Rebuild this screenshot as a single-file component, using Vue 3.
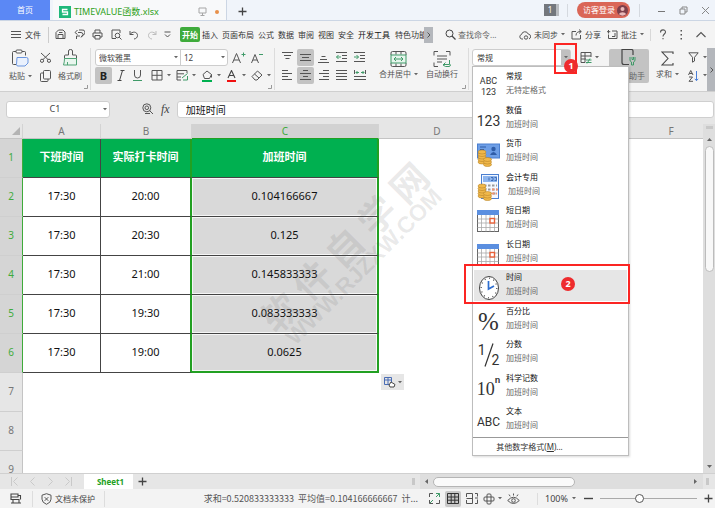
<script setup>
import { h, ref } from 'vue'

const K = 'fill="none" stroke="#555" stroke-width="1"'
const G = 'fill="none" stroke="#3f9a68" stroke-width="1"'
const S = 'fill="none" stroke="#c9c9c9" stroke-width="1"'

const icons = {
  logo: [12, 12, '<rect width="12" height="12" fill="#1fb87a"/><path d="M8.5 3.5h-5v2.5h5v2.5h-5" fill="none" stroke="#fff" stroke-width="1.3"/>'],
  monitor: [9, 9, '<path d="M1 1h7v5h-7zM4.5 6v2M2.5 8.5h4" fill="none" stroke="#a6a6a6"/>'],
  plus: [9, 9, '<path d="M4.5 .5v8M.5 4.5h8" fill="none" stroke="#444" stroke-width="1.3"/>'],
  user: [11, 11, '<circle cx="5.5" cy="5.5" r="5.5" fill="#7d3f4b"/><circle cx="5.5" cy="4" r="2" fill="#e9b9b9"/><path d="M2 9.3c.3-2.800 6.700-2.800 7 0a5.500 5.500 0 0 1-7 0z" fill="#e9b9b9"/>'],
  min: [9, 9, '<path d="M1 5.500h7" fill="none" stroke="#777"/>'],
  restore: [9, 9, '<path d="M1 3h5v5h-5zM3 3v-2h5v5h-2" fill="none" stroke="#888"/>'],
  close: [9, 9, '<path d="M1 1l7 7M8 1l-7 7" fill="none" stroke="#888"/>'],
  burger: [10, 9, '<path d="M0 1.500h10M0 4.500h10M0 7.500h10" fill="none" stroke="#555"/>'],
  save: [11, 11, `<path d="M1 9.500v-6l2.500-2.500h4.500l2 2v6.500zM3 9.500v-4h5v4M4 3.500h3.500" ${K}/>`],
  saveas: [11, 11, `<path d="M2.500 10v-3h3.500M4 3.500h3a1.500 1.500 0 0 1 0 4M3.500 1l-2.500 2.500 2.500 2M5 1h3a2.500 2.500 0 0 1 1 5l-2 2.500" ${K}/>`],
  print: [11, 11, `<path d="M3 4v-3h5v3M3 8h-2v-4h9v4h-2M3 6.500h5v3.500h-5z" ${K}/>`],
  preview: [11, 11, `<path d="M5 9.500h-4v-8.500h8v3" ${K}/><circle cx="6.500" cy="6.500" r="2.300" ${K}/><path d="M8.200 8.200l2.300 2.300" ${K}/>`],
  undo: [10, 10, `<path d="M1 1v3.500h3.500M1 4.500c2-3.500 7.500-3 7.500 1 0 2-1.500 3.300-3.500 3.500" ${K}/>`],
  redo: [10, 10, '<path d="M9 1v3.500h-3.500M9 4.500c-2-3.500-7.500-3-7.500 1 0 2 1.500 3.300 3.500 3.500" fill="none" stroke="#bdbdbd"/>'],
  more: [7, 7, `<path d="M.500 1h6M1 3.500l2.500 2.500 2.500-2.500" ${K}/>`],
  search: [11, 11, '<circle cx="4.500" cy="4.500" r="3.500" fill="none" stroke="#444"/><path d="M7 7l3.500 3.500" stroke="#444" stroke-width="1.200"/>'],
  cloud: [12, 10, `<path d="M4 9h-1.200a2.300 2.300 0 0 1-.3-4.500 3.500 3.500 0 0 1 6.700-.5 2.600 2.600 0 0 1 .8 5" ${K}/><circle cx="7" cy="7.500" r="1.700" ${K}/>`],
  share: [11, 11, `<path d="M5 2.500h-4v7.500h8.500v-4M5 6.500c0-3 2-4 5-4M8 .500l2.300 2-2.300 2" ${K}/>`],
  comment: [11, 11, `<path d="M5 2h5v7.500h-8.500v-4M1.500 1v3.500M0 2.700h3.300M8 4v3.500h-3" ${K}/>`],
  help: [8, 11, '<path d="M1.500 3.500c0-3.500 5-3.300 5-.5 0 2-2.500 2-2.500 4.500M4 9v1.300" fill="none" stroke="#555" stroke-width="1.100"/>'],
  dots: [3, 10, '<path d="M.500 0h1.500v1.500h-1.500zM.500 4h1.500v1.500h-1.500zM.500 8h1.500v1.500h-1.500z" fill="#555"/>'],
  up: [10, 7, '<path d="M.500 6l4.500-4.500 4.500 4.500" fill="none" stroke="#555" stroke-width="1.100"/>'],
  right: [4, 6, '<path d="M.500 .500l2.500 2.500-2.500 2.500" fill="none" stroke="#555"/>'],
  caret: [4, 3, '<path d="M0 0h4l-2 2.300z" fill="#666"/>'],
  paste: [17, 18, '<path d="M5 2.500h-3.500q-1 0-1 1v11q0 1 1 1h3M10 2.500h2.500q1 0 1 1v3" fill="none" stroke="#555"/><rect x="4" y="1" width="6" height="3" rx="1" fill="#fff" stroke="#555"/><path d="M5 8.500h9.500q1.500 0 1.500 1.500v4l-3 3h-7q-1.500 0-1.500-1.500z" fill="#eaf1fd" stroke="#6a95df"/>'],
  cut: [11, 11, `<path d="M1 1l7 6.500M10 1l-7 6.500" ${K}/><circle cx="2" cy="8.800" r="1.600" ${K}/><circle cx="9" cy="8.800" r="1.600" ${K}/>`],
  copy: [11, 12, `<rect x="3.500" y=".5" width="7" height="8.500" rx="1" ${K}/><path d="M3.500 3h-2q-1 0-1 1v6.500q0 1 1 1h5.500q1 0 1-1v-1.500" ${K}/>`],
  brush: [15, 17, '<path d="M1.500 9.500v-2.500q0-1 1-1h3v-4q0-1.500 2-1.500t2 1.500v4h3q1 0 1 1v2.500z" fill="none" stroke="#555"/><path d="M1.500 9.500h12v6.500h-13q1-3 1-6.500M4.500 16v-3" fill="#e9f6ee" stroke="#4fa375"/>'],
  italic: [8, 11, '<path d="M3.500 .500h4M.500 10.500h4M5.500 .500l-3 10" fill="none" stroke="#444"/>'],
  underline: [9, 11, '<path d="M1.500 0v5q0 3 3 3t3-3v-5" fill="none" stroke="#555"/><path d="M0 10.500h9" stroke="#3f9a68"/>'],
  borders: [12, 11, `<path d="M1 .500h10v9.500h-10zM6 .500v9.500M1 5.300h10" ${K}/>`],
  cellstyle: [12, 11, `<path d="M11 3v-2.500h-10v9.500h4M1 3.800h7M1 7h4" ${K}/><path d="M6 8l5.500-4.500M7 10h4.500v-4" ${G}/>`],
  bucket: [12, 12, `<path d="M2 4.500l4-3.500 4.500 3.500-2 4h-5zM10.500 4.500v3" ${K}/><rect x="1" y="10" width="10" height="2" fill="#00b050"/>`],
  fontcolor: [11, 12, '<path d="M2 8l3.500-7.500 3.500 7.500M3.300 5.500h4.400" fill="none" stroke="#444" stroke-width="1.100"/><rect x="1" y="10" width="9" height="2" fill="#f01010"/>'],
  eraser: [12, 11, `<path d="M1 6.500l5.500-5.500 4.500 4-5 5h-2zM3.500 4l4.500 4" ${K}/>`],
  bigger: [14, 12, '<path d="M.500 11l4-9.500 4 9.500M2 8h5" fill="none" stroke="#555"/><path d="M9.500 2.500h4M11.500 .500v4" stroke="#3f9a68"/>'],
  smaller: [13, 12, '<path d="M.500 11l3.500-8.500 3.500 8.500M2 8h4" fill="none" stroke="#555"/><path d="M8 2.500h4" stroke="#3f9a68"/>'],
  top: [11, 11, `<path d="M0 .500h11M2 3.500h7M3.500 6.500h4" ${K}/>`],
  middle: [11, 11, `<path d="M0 2.500h11M2 5.500h7M0 8.500h11" ${K}/>`],
  bottom: [11, 11, `<path d="M3.500 4.500h4M2 7.500h7M0 10.500h11" ${K}/>`],
  outdent: [11, 11, `<path d="M0 .500h11M6 3.500h5M6 6.500h5M0 9.500h11" ${K}/><path d="M5 5h-4.500M2.500 3l-2 2 2 2" ${G}/>`],
  indent: [11, 11, `<path d="M0 .500h11M6 3.500h5M6 6.500h5M0 9.500h11" ${K}/><path d="M0 5h4.500M2.500 3l2 2-2 2" ${G}/>`],
  left: [11, 11, `<path d="M0 .500h6M0 3.500h10M0 6.500h6M0 9.500h10" ${K}/>`],
  center: [11, 11, `<path d="M3 .500h5M0 3.500h11M3 6.500h5M0 9.500h11" ${K}/>`],
  alignright: [11, 11, `<path d="M5 .500h6M1 3.500h10M5 6.500h6M1 9.500h10" ${K}/>`],
  justify: [11, 11, `<path d="M0 .500h11M0 3.500h11M0 6.500h11M0 9.500h11" ${K}/>`],
  spread: [12, 11, `<path d="M.500 0v4M11.500 0v4M0 6.500h12M0 9.500h12" ${K}/><path d="M2 2.500h3M7 2.500h3M3.500 1l-1.500 1.500 1.500 1.500M8.500 1l1.500 1.500-1.500 1.500" ${G}/>`],
  merge: [17, 16, `<path d="M1 4v-2q0-1.500 1.500-1.500h12q1.500 0 1.500 1.500v2M1 12v2q0 1.500 1.500 1.500h12q1.500 0 1.500-1.500v-2M6 .500v3M11 .500v3M6 12.500v3M11 12.500v3" ${K}/><rect x="1" y="4" width="15" height="8" fill="#e6f5ec" stroke="#3f9a68"/><path d="M4 8h9M6 6l-2 2 2 2M11 6l2 2-2 2" ${G}/>`],
  wrap: [18, 16, `<path d="M5 .500h-4v4M13 .500h4v4M1 11.500v4h4M4 5h10M4 8h10M4 11h5" ${K}/><path d="M16.500 9v4.500h-6M12.500 11.500l-2.500 2.500 2.500 1.500h3.500q1.500 0 1.500-2" ${G}/>`],
  tablestyle: [12, 12, `<path d="M11 5v-4.500h-10v10h4M1 4h10M1 7h5M5 .500v10" ${K}/><path d="M6 8h5.500M6 10.500h5.500M10 6.500l-3 5" ${G}/>`],
  helper: [16, 17, '<path d="M8 15.500h-5q-2 0-2-2v-13h9.500q1.500 0 1.500 1.500v4" fill="none" stroke="#444" stroke-width="1.200"/><path d="M9 8v3q0 1.500 1.500 2v3h2v-3q1.500-.5 1.500-2v-3M11 8v2.500h1.500v-2.500" fill="none" stroke="#3f9a68"/>'],
  sum: [13, 15, '<path d="M12 3v-2h-11l6 6.500-6 6.500h11v-2" fill="none" stroke="#444" stroke-width="1.100"/>'],
  filter: [11, 11, `<path d="M.800 .800h9.400l-3.700 4.500v3.700l-2 1.200v-4.900z" ${K}/>`],
  sort: [11, 12, `<path d="M.500 5l2.250-4.500 2.250 4.500M1.300 3.500h3M1 7h3.500l-3.500 4.300h4" ${K}/><path d="M8.500 1v9.500M6.800 8.800l1.700 1.900 1.700-1.900" fill="none" stroke="#4a7fd8"/>`],
  corner: [4, 4, '<path d="M3.500 0v3.500h-3.500" fill="none" stroke="#999"/>'],
  zoomfx: [12, 12, `<circle cx="4.800" cy="4.800" r="4" ${K}/><circle cx="4.800" cy="4.800" r="1.800" ${K}/><path d="M7.500 7.500l3.500 3.500M3 10.500h5" ${K}/>`],
  corner2: [8, 8, '<path d="M8 0v8h-8z" fill="#b4b4b4"/>'],
  fillopt: [12, 11, '<path d="M.500 .500h7v7h-7zM.500 3h7M4 .500v7" fill="none" stroke="#4a6db5"/><path d="M7 5l4 2.500-1 2.500h-4l-1-2z" fill="#fff" stroke="#444"/>'],
  first: [7, 9, `<path d="M.500 0v9M6.500 .500l-4 4 4 4" ${S}/>`],
  prev: [5, 9, `<path d="M4.500 .500l-4 4 4 4" ${S}/>`],
  next: [5, 9, `<path d="M.500 .500l4 4-4 4" ${S}/>`],
  last: [7, 9, `<path d="M6.500 0v9M.500 .500l4 4-4 4" ${S}/>`],
  triL: [3, 5, '<path d="M3 0v5l-3-2.500z" fill="#666"/>'],
  triR: [3, 5, '<path d="M0 0v5l3-2.500z" fill="#666"/>'],
  triU: [5, 3, '<path d="M0 3h5l-2.500-3z" fill="#666"/>'],
  triD: [5, 3, '<path d="M0 0h5l-2.500 3z" fill="#666"/>'],
  macro: [12, 11, '<path d="M1 1h7v3h-7zM1 4v2.500h5M8 2.500h2.500v4M3 10v-3.500h6v3.500zM1 10h10" fill="none" stroke="#444" stroke-width="1.100"/>'],
  shield: [11, 12, `<path d="M5.500 .700l4.500 1.500v4q0 3.300-4.500 5.100-4.500-1.800-4.500-5.100v-4zM3.700 4.200l3.600 3.600M7.300 4.200l-3.600 3.600" ${K}/>`],
  expand: [11, 11, `<path d="M4 .500h-3.500v3.500M7 10.500h3.500v-3.500M.500 7v3.500h3.500" ${K}/><path d="M7 .500h3.500v3.500M10.500 .500l-3.500 3.500M1 10l3-3" ${G}/>`],
  grid: [12, 11, '<path d="M.500 .500h11v10h-11zM.500 4h11M.500 7.200h11M4.200 .500v10M7.800 .500v10" fill="none" stroke="#333"/>'],
  pagebreak: [12, 11, `<path d="M.500 4v-3.500h6v10h-6v-3.500M.500 5.500h6M9 .500h2.500v3M9 10.500h2.500v-4M9 5h3" ${K}/>`],
  cross: [12, 12, `<rect x="4" y="1" width="4" height="10" rx="1" ${K}/><rect x="1" y="4" width="10" height="4" rx="1" ${K}/>`],
  eye: [13, 12, `<path d="M.700 7.500q5.800-6.500 11.600 0-5.800 6-11.600 0zM6.500 .500v2M2 1.500l1.200 1.800M11 1.500l-1.200 1.800" ${K}/><circle cx="6.500" cy="7.500" r="1.800" ${K}/>`],
  minus: [9, 9, '<path d="M0 4.500h9" stroke="#444" stroke-width="1.400"/>'],
  money: [23, 25, '<rect x=".5" y="2" width="22" height="14" fill="#6d9ee6" stroke="#4a7fd0"/><path d="M3 5h6M3 7.500h4" stroke="#2f5da8"/><circle cx="16.500" cy="7" r="2.200" fill="#2f5da8"/><path d="M13 13q3.500-6 7 0z" fill="#2f5da8"/><g fill="#f0b84a" stroke="#b98428" stroke-width=".6"><ellipse cx="5" cy="20" rx="4" ry="2"/><ellipse cx="5" cy="17.500" rx="4" ry="2"/><ellipse cx="5" cy="15" rx="4" ry="2"/><ellipse cx="5" cy="12.500" rx="4" ry="2"/><ellipse cx="5" cy="10" rx="4" ry="2"/><ellipse cx="10.500" cy="22.500" rx="4" ry="2"/><ellipse cx="10.500" cy="20" rx="4" ry="2"/><ellipse cx="10.500" cy="17.500" rx="4" ry="2"/></g>'],
  account: [23, 27, '<rect x="4.500" y=".5" width="17" height="24" fill="#f4f8ff" stroke="#4a7fd0"/><rect x="6" y="2" width="14" height="6" fill="#8db5ee"/><path d="M12 3.500v3M14 3.500h2v3h-2M17.500 3.500h2v3h-2" fill="none" stroke="#2f5da8" stroke-width=".8"/><path d="M7 11.500h13M7 15.500h13M12 19.500h8" stroke="#9a9a9a" stroke-width="2" stroke-dasharray="2.500 1.500"/><path d="M15 15.500h6M15 19.500h5" stroke="#ee9272" stroke-width="2" stroke-dasharray="2.500 1.500"/><g fill="#f0b84a" stroke="#b98428" stroke-width=".6"><ellipse cx="5" cy="22" rx="4" ry="2"/><ellipse cx="5" cy="19.500" rx="4" ry="2"/><ellipse cx="5" cy="17" rx="4" ry="2"/><ellipse cx="5" cy="14.500" rx="4" ry="2"/><ellipse cx="5" cy="12" rx="4" ry="2"/><ellipse cx="10.500" cy="24.500" rx="4" ry="2"/><ellipse cx="10.500" cy="22" rx="4" ry="2"/><ellipse cx="10.500" cy="19.500" rx="4" ry="2"/></g>'],
  calendar: [23, 24, '<rect x=".5" y="5.500" width="21" height="17" fill="#fff" stroke="#666"/><path d="M.500 10h21M.500 14h21M.500 18.500h21M4.500 5.500v17M9 5.500v17M13 5.500v17M17.500 5.500v17" fill="none" stroke="#aaa" stroke-width=".8"/><rect y="1" width="22" height="5" fill="#5b8fe0"/><rect x="13" y="9.500" width="4.500" height="4.500" fill="#fff" stroke="#e8623a" stroke-width="1.400"/>'],
  clock: [22, 26, '<ellipse cx="11" cy="13" rx="9.500" ry="11.500" fill="#fff" stroke="#444"/><ellipse cx="11" cy="13" rx="7.800" ry="9.800" fill="none" stroke="#555" stroke-width="1.300" stroke-dasharray="1 3.600"/><path d="M10.500 6v8l5.500-3" fill="none" stroke="#2f6fd0" stroke-width="1.700"/>'],
  slash: [10, 24, '<path d="M9 .500l-8 23" fill="none" stroke="#333" stroke-width="1.200"/>']
}

const Icon = ({ n }) => {
  const [w, hh, body] = icons[n]
  return h('svg', { width: w, height: hh, viewBox: `0 0 ${w} ${hh}`, 'aria-hidden': 'true', innerHTML: body })
}
Icon.props = ['n']

const quick = [
  ['save', '保存'], ['saveas', '输出'], ['print', '打印'], ['preview', '预览'], ['undo', '撤销'], ['redo', '恢复'], ['more', '更多']
]
const tabs = ['开始', '插入', '页面布局', '公式', '数据', '审阅', '视图', '安全', '开发工具', '特色功能']
const splits = [
  ['borders', '边框'], ['cellstyle', '绘图边框'], ['bucket', '填充颜色'], ['fontcolor', '字体颜色'], ['eraser', '清除']
]
const aligns = [
  ['top', '顶端对齐'], ['middle', '垂直居中', true], ['bottom', '底端对齐'], ['outdent', '减少缩进'], ['indent', '增加缩进'],
  ['left', '左对齐'], ['center', '水平居中', true], ['alignright', '右对齐'], ['justify', '两端对齐'], ['spread', '分散对齐']
]
const formats = [
  { name: '常规', sample: '无特定格式', glyph: ['ABC', '123'], kind: 'stack' },
  { name: '数值', sample: '加班时间', glyph: ['123'], kind: 'digits' },
  { name: '货币', sample: '加班时间', icon: 'money' },
  { name: '会计专用', sample: '\u00a0加班时间', icon: 'account' },
  { name: '短日期', sample: '加班时间', icon: 'calendar' },
  { name: '长日期', sample: '加班时间', icon: 'calendar' },
  { name: '时间', sample: '加班时间', icon: 'clock', active: true },
  { name: '百分比', sample: '加班时间', glyph: ['%'], kind: 'pct' },
  { name: '分数', sample: '加班时间', glyph: ['1', '2'], kind: 'fraction' },
  { name: '科学记数', sample: '加班时间', glyph: ['10'], sup: 'n', kind: 'power' },
  { name: '文本', sample: '加班时间', glyph: ['ABC'], kind: 'abc' }
]
const columns = ['A', 'B', 'C', 'D', 'E', 'F']
const rows = [
  ['下班时间', '实际打卡时间', '加班时间'],
  ['17:30', '20:00', '0.104166667'],
  ['17:30', '20:30', '0.125'],
  ['17:30', '21:00', '0.145833333'],
  ['17:30', '19:30', '0.083333333'],
  ['17:30', '19:00', '0.0625'],
  [], [], []
]
const format = ref('常规')
const formula = ref('加班时间')
const cellName = ref('C1')
const zoom = ref(40)
</script>

<template>
  <div class="app">
    <header class="titlebar">
      <button class="home">首页</button>
      <div class="doc">
        <Icon n="logo" />
        <span class="docname">TIMEVALUE函数.xlsx</span>
        <Icon n="monitor" />
        <i class="unsaved"></i>
      </div>
      <button class="newtab" aria-label="新建"><Icon n="plus" /></button>
      <span class="count">1</span>
      <i class="vline"></i>
      <button class="login">访客登录<Icon n="user" /></button>
      <i class="vline"></i>
      <div class="winbtns">
        <button aria-label="最小化"><Icon n="min" /></button>
        <button aria-label="还原"><Icon n="restore" /></button>
        <button aria-label="关闭"><Icon n="close" /></button>
      </div>
    </header>

    <div class="menubar">
      <button class="file"><Icon n="burger" />文件</button>
      <div class="quick">
        <button v-for="q in quick" :key="q[0]" :aria-label="q[1]"><Icon :n="q[0]" /></button>
      </div>
      <nav class="tabs">
        <button v-for="(t, i) in tabs" :key="t" :class="{ on: i === 0, strong: i === 8 }">{{ t }}</button>
      </nav>
      <button class="tabscroll" aria-label="更多选项卡"><Icon n="right" /></button>
      <button class="find"><Icon n="search" />查找命令...</button>
      <div class="actions">
        <button><Icon n="cloud" />未同步<Icon n="caret" /></button>
        <button><Icon n="share" />分享</button>
        <button><Icon n="comment" />批注<Icon n="caret" /></button>
      </div>
      <div class="tail">
        <button aria-label="帮助"><Icon n="help" /></button>
        <button aria-label="菜单"><Icon n="dots" /></button>
        <button aria-label="折叠"><Icon n="up" /></button>
      </div>
    </div>

    <div class="ribbon">
      <section class="group clip">
        <button class="big"><Icon n="paste" /><span>粘贴<Icon n="caret" /></span></button>
        <div class="pair">
          <button aria-label="剪切"><Icon n="cut" /></button>
          <button aria-label="复制"><Icon n="copy" /></button>
        </div>
        <button class="big"><Icon n="brush" /><span>格式刷</span></button>
        <Icon n="corner" class="launch" />
      </section>

      <section class="group font">
        <div class="line">
          <div class="fontbox">
            <label class="pick family"><select aria-label="字体"><option>微软雅黑</option></select><Icon n="caret" /></label>
            <label class="pick size"><select aria-label="字号"><option>12</option></select><Icon n="caret" /></label>
          </div>
          <button class="resize" aria-label="增大字号"><Icon n="bigger" /></button>
          <button class="resize" aria-label="减小字号"><Icon n="smaller" /></button>
        </div>
        <div class="line">
          <button class="tool on bold">B</button>
          <button class="tool" aria-label="斜体"><Icon n="italic" /></button>
          <button class="tool" aria-label="下划线"><Icon n="underline" /></button>
          <div class="splits">
            <button v-for="s in splits" :key="s[0]" :aria-label="s[1]"><Icon :n="s[0]" /><Icon n="caret" /></button>
          </div>
        </div>
        <Icon n="corner" class="launch" />
      </section>

      <section class="group align">
        <div class="aligns">
          <button v-for="a in aligns" :key="a[0]" class="tool" :class="{ on: a[2] }" :aria-label="a[1]"><Icon :n="a[0]" /></button>
        </div>
        <button class="big"><Icon n="merge" /><span>合并居中<Icon n="caret" /></span></button>
        <button class="big"><Icon n="wrap" /><span>自动换行</span></button>
        <Icon n="corner" class="launch" />
      </section>

      <section class="group number">
        <div class="format">
          <input v-model="format" aria-label="数字格式">
          <button aria-label="展开"><Icon n="caret" /></button>
          <div class="mark first"><b>1</b></div>
          <div class="menu">
            <ul>
              <li v-for="f in formats" :key="f.name">
                <button :class="{ active: f.active }">
                  <span class="pic">
                    <Icon v-if="f.icon" :n="f.icon" />
                    <span v-else class="glyph" :class="f.kind">
                      <span>{{ f.glyph[0] }}</span>
                      <Icon v-if="f.kind === 'fraction'" n="slash" />
                      <span v-if="f.glyph[1]">{{ f.glyph[1] }}</span>
                      <sup v-if="f.sup">{{ f.sup }}</sup>
                    </span>
                  </span>
                  <span class="words"><strong>{{ f.name }}</strong><span>{{ f.sample }}</span></span>
                </button>
                <div v-if="f.active" class="mark second"><b>2</b></div>
              </li>
            </ul>
            <button class="others">其他数字格式(<u>M</u>)...</button>
          </div>
        </div>
        <button class="tstyle" aria-label="单元格样式"><Icon n="tablestyle" /><Icon n="caret" /></button>
      </section>

      <button class="big helper"><Icon n="helper" /><span>文档助手</span></button>
      <button class="big sum"><Icon n="sum" /><span>求和<Icon n="caret" /></span></button>
      <div class="pair wide">
        <button aria-label="筛选"><Icon n="filter" /><Icon n="caret" /></button>
        <button aria-label="排序"><Icon n="sort" /><Icon n="caret" /></button>
      </div>
      <button class="ribscroll" aria-label="向右"><Icon n="right" /></button>
    </div>

    <div class="formulabar">
      <div class="namebox"><input v-model="cellName" aria-label="名称框"><Icon n="caret" /></div>
      <button aria-label="查看"><Icon n="zoomfx" /></button>
      <button class="fx">fx</button>
      <input v-model="formula" class="formula" aria-label="编辑栏">
    </div>

    <main class="work">
      <div class="sheet">
        <table>
          <colgroup>
            <col class="chead"><col class="ca"><col class="cb"><col class="cc"><col class="cx"><col class="cx"><col class="cx">
          </colgroup>
          <thead>
            <tr>
              <th class="all"><Icon n="corner2" /></th>
              <th v-for="c in columns" :key="c" scope="col" :class="{ sel: c === 'C' }">{{ c }}</th>
            </tr>
          </thead>
          <tbody>
            <tr v-for="(r, i) in rows" :key="i" :class="{ filled: r.length, title: i === 0, end: i === 5 }">
              <th scope="row">{{ i + 1 }}</th>
              <td v-for="(c, j) in columns" :key="c" :class="'c' + j">{{ r[j] }}<button v-if="i === 6 && j === 3" class="fillopt" aria-label="填充选项"><Icon n="fillopt" /><Icon n="caret" /></button></td>
            </tr>
          </tbody>
        </table>
        <div class="watermark">
          <div class="wcn"><span v-for="c in '软件自学网'" :key="c">{{ c }}</span></div>
          <div class="wen">WWW.RJZXW.COM</div>
        </div>
      </div>
      <div class="vscroll"><b></b><Icon n="triU" /><i></i><Icon n="triD" /></div>
    </main>

    <div class="sheetbar">
      <div class="sheetnav">
        <button v-for="n in ['first', 'prev', 'next', 'last']" :key="n" :aria-label="n"><Icon :n="n" /></button>
      </div>
      <button class="sheettab">Sheet1</button>
      <button class="addsheet" aria-label="新建工作表"><Icon n="plus" /></button>
      <i class="grip"></i>
      <div class="hscroll"><Icon n="triL" /><i></i><Icon n="triR" /></div>
      <i class="grip"></i>
    </div>

    <footer class="status">
      <button class="macro" aria-label="宏"><Icon n="macro" /></button>
      <button class="protect"><Icon n="shield" />文档未保护</button>
      <span class="stats">求和=0.520833333333&nbsp; 平均值=0.104166666667&nbsp; 计...</span>
      <div class="views">
        <button aria-label="全屏"><Icon n="expand" /></button>
        <button class="on" aria-label="普通视图"><Icon n="grid" /></button>
        <button aria-label="分页预览"><Icon n="pagebreak" /></button>
        <button class="withcaret" aria-label="阅读模式"><Icon n="cross" /><Icon n="caret" /></button>
        <button aria-label="护眼模式"><Icon n="eye" /></button>
      </div>
      <div class="zoomer">
        <button class="percent">100%<Icon n="caret" /></button>
        <button aria-label="缩小"><Icon n="minus" /></button>
        <input v-model="zoom" type="range" min="0" max="100" aria-label="缩放">
        <button aria-label="放大"><Icon n="plus" /></button>
      </div>
    </footer>
  </div>
</template>

<style>
html, body { margin: 0; }
body { overflow: hidden; }
</style>

<style scoped>
.app {
  display: flex;
  flex-direction: column;
  height: 100vh;
  overflow: hidden;
  background: #f4f4f4;
  color: #444;
  font-family: "Noto Sans", "Noto Sans CJK SC", sans-serif;
  font-size: 8px;
  line-height: 12px;
}
button, input, select {
  margin: 0;
  padding: 0;
  border: 0;
  background: none;
  color: inherit;
  font: inherit;
  outline: 0;
  white-space: nowrap;
}
button { display: flex; align-items: center; justify-content: center; flex: none; }
svg { display: block; flex: none; }

.titlebar { display: flex; align-items: center; flex: none; height: 20px; background: #f0f4fa; border-bottom: 1px solid #ccd6e4; padding-right: 5px; }
.home { align-self: stretch; width: 50px; background: #5b88f5; color: #fff; }
.doc { display: flex; align-items: center; align-self: stretch; width: 160px; margin-left: 3px; padding: 3px 7px 0 6px; gap: 3px; background: #f8f9fa; border-right: 1px solid #ccd6e4; color: #2ea121; font-size: 9px; }
.docname { flex: 1; white-space: nowrap; }
.unsaved { width: 4px; height: 4px; margin-left: 5px; border-radius: 50%; background: #e8914a; }
.newtab { margin: 3px auto 0 11px; }
.count { width: 12px; margin-right: 8px; background: #73777d; border-right: 3px solid #b9bcc0; color: #fff; text-align: center; line-height: 12px; }
.vline { width: 1px; height: 13px; background: #d5d9df; }
.login { gap: 2px; margin: 0 9px; padding: 0 2px 0 6px; height: 16px; border-radius: 8px; background: #da6657; color: #fff; }
.winbtns { display: flex; gap: 13px; margin-left: 17px; }

.menubar { display: flex; align-items: center; flex: none; height: 27px; padding: 0 9px 0 11px; }
.file { gap: 4px; padding-right: 7px; height: 16px; border-right: 1px solid #ccc; color: #333; }
.quick { display: flex; align-items: center; width: 116px; margin-left: 6px; justify-content: space-between; }
.tabs { display: flex; flex: none; gap: 4px; margin-left: 9px; width: 244px; overflow: hidden; color: #333; }
.tabs .on { width: 20px; height: 15px; margin-right: -2px; border-radius: 2px; background: #3fab3b; color: #fff; font-weight: 700; }
.tabs .strong { color: #111; margin-right: 1px; }
.tabscroll { width: 9px; height: 16px; background: #b4b7bc; }
.find { gap: 2px; margin-left: 12px; color: #666; }
.actions { display: flex; gap: 6px; margin-left: auto; padding-right: 6px; border-right: 1px solid #d8d8d8; }
.actions button { gap: 3px; }
.tail { display: flex; align-items: center; gap: 13px; padding-left: 8px; }

.ribbon { display: flex; flex: none; height: 43px; border-bottom: 1px solid #cfcfcf; position: relative; z-index: 2; }
.group { position: relative; display: flex; flex: none; padding-top: 1px; }
.group::after { content: ""; position: absolute; right: 0; top: 0; width: 1px; height: 42px; background: #dcdcdc; }
.launch { position: absolute; right: 3px; bottom: 2px; }
.big { flex-direction: column; justify-content: space-between; height: 34px; color: #555; }
.big span { display: flex; align-items: center; gap: 3px; line-height: 14px; }
.pair { display: flex; flex-direction: column; gap: 1px; padding-top: 1px; }
.pair button { height: 17px; }
.clip { padding-left: 9px; padding-right: 9px; gap: 4px; }
.clip .pair { padding: 0; width: 18px; }
.font { flex-direction: column; gap: 1px; padding-left: 4px; padding-right: 4px; }
.line { display: flex; height: 17px; align-items: center; }
.fontbox { display: flex; flex: none; width: 133px; height: 17px; margin-right: 4px; border: 1px solid #cdcdcd; border-radius: 3px; box-sizing: border-box; background: #fff; }
.pick { display: flex; align-items: center; padding-right: 2px; padding-left: 3px; }
.pick select { flex: 1; appearance: none; min-width: 0; }
.pick.family { width: 79px; border-right: 1px solid #cdcdcd; }
.pick.size { flex: 1; }
.resize { margin-right: 5px; }
.tool { width: 17px; height: 17px; border-radius: 2px; }
.tool.on { background: #c3c3c3; }
.bold { font-size: 11px; font-weight: 700; color: #222; }
.splits { display: flex; gap: 5px; margin-left: 5px; }
.splits button { width: 20px; justify-content: space-between; }
.align { width: 183px; padding-left: 4px; padding-right: 7px; }
.aligns { display: grid; grid-template-columns: repeat(5, 17px); grid-auto-rows: 17px; gap: 1px; margin-right: 11px; }
.align .big { padding-top: 2px; height: 32px; margin-right: 8px; }
.align .big:last-of-type { margin-right: 0; }
.number { padding-left: 3px; gap: 9px; }
.number::after { display: none; }
.format { position: relative; display: flex; box-sizing: border-box; width: 99px; height: 17px; border: 1px solid #cdcdcd; border-radius: 3px; background: #fff; }
.format input { flex: 1; min-width: 0; padding-left: 4px; color: #333; }
.format > button { width: 9px; background: #c0c0c0; }
.tstyle { height: 17px; gap: 3px; }
.helper { width: 40px; margin: 1px 0 0 10px; border-radius: 2px; background: #c3c3c3; color: #666; }
.sum { margin: 1px 9px 0 7px; padding-top: 2px; height: 32px; }
.pair.wide button { gap: 4px; }
.ribscroll { width: 9px; height: 43px; margin-left: auto; background: #b4b7bc; }

.mark { position: absolute; border: 2px solid #fb2523; box-sizing: border-box; pointer-events: none; z-index: 3; }
.mark b { position: absolute; width: 14px; height: 14px; border-radius: 50%; background: #ee2b2d; color: #fff; font-size: 9px; line-height: 14px; text-align: center; }
.mark.first { left: 81px; top: -7px; width: 23px; height: 31px; }
.mark.first b { right: -3px; bottom: -1px; }
.mark.second { left: -10px; right: -3px; top: -5px; bottom: -1px; }
.mark.second b { right: 53px; top: 11px; }

.menu { position: absolute; left: -1px; top: 16px; width: 155px; border: 1px solid #bdbdbd; background: #fff; box-shadow: 1px 1px 2px rgba(0, 0, 0, .15); }
.menu ul { display: grid; grid-auto-rows: 1fr; height: 369px; margin: 0; padding: 1px 1px 0; list-style: none; border-bottom: 1px solid #999; }
.menu li { position: relative; min-height: 0; }
.menu li button { width: 100%; height: 31px; margin-top: 1px; justify-content: flex-start; align-items: flex-start; }
.menu li .active { background: #e6e6e6; }
.pic { display: flex; align-items: center; justify-content: center; width: 23px; height: 31px; margin: 0 6px 0 3px; padding-top: 5px; box-sizing: border-box; }
.words { display: flex; flex-direction: column; gap: 2px; padding-top: 1px; line-height: 12px; text-align: left; color: #666; }
.words strong { font-weight: 400; color: #111; }
.glyph { display: flex; color: #333; font-family: Roboto, "Liberation Sans", sans-serif; }
.stack { flex-direction: column; font-size: 9px; line-height: 11px; align-items: center; }
.digits { font-size: 14px; line-height: 20px; }
.abc { font-size: 12px; line-height: 20px; }
.pct { font-family: "Liberation Serif", serif; font-size: 25px; line-height: 28px; }
.fraction { font-size: 14px; line-height: 14px; }
.fraction svg { margin: 0 -2px; }
.fraction span:last-of-type { align-self: flex-end; }
.power { font-family: "Liberation Serif", serif; font-size: 18px; line-height: 28px; }
.power sup { font: 700 9px/10px "Liberation Sans", sans-serif; }
.others { width: 100%; height: 17px; padding-right: 42px; color: #333; }

.formulabar { display: flex; align-items: center; flex: none; height: 32px; padding: 7px 1px 5px 6px; background: #e6e6e6; box-sizing: border-box; }
.namebox { display: flex; align-items: center; box-sizing: border-box; width: 104px; height: 17px; padding-right: 2px; margin-right: 32px; border: 1px solid #cfcfcf; border-radius: 3px; background: #fff; }
.namebox input { flex: 1; min-width: 0; text-align: center; font-size: 9px; }
.fx { margin: 0 7px; font: italic 12px/14px "Liberation Serif", serif; }
.formula { flex: 1; min-width: 0; height: 17px; box-sizing: border-box; padding-left: 8px; border: 1px solid #cfcfcf; border-radius: 3px; background: #fff; font-size: 10px; color: #111; }

.work { display: flex; flex: 1; min-height: 0; }
.sheet { position: relative; flex: 1; min-width: 0; overflow: hidden; background: #fff; }
table { table-layout: fixed; width: 730px; border-collapse: separate; border-spacing: 0; font-size: 11px; line-height: 14px; color: #111; }
.chead { width: 23px; }
.ca { width: 78px; }
.cb { width: 91px; }
.cc { width: 187px; }
.cx { width: 117px; }
th, td { padding: 0; box-sizing: border-box; text-align: center; }
thead th { height: 15px; background: #e6e6e6; border-right: 1px solid #d3d3d3; border-bottom: 1px solid #c4c4c4; color: #777; font-size: 10px; line-height: 13px; font-weight: 400; }
thead .sel { background: #d2d2d2; color: #3fab3b; border-bottom-color: #22a022; }
.all svg { margin-left: 12px; }
tbody th, tbody td { padding-bottom: 2px; }
tbody th { height: 39px; background: #e6e6e6; border-right: 1px solid #c4c4c4; border-bottom: 1px solid #cfcfcf; color: #777; font-size: 10px; font-weight: 400; }
.filled th { background: #d5d5d5; color: #3fab3b; border-right: 1px solid #3fab3b; }
.filled .c0, .filled .c1, .filled .c2 { border-right: 1px solid #444; border-bottom: 1px solid #444; }
.filled .c1 { border-right: 2px solid #22a022; }
.filled .c2 { background: #d9d9d9; box-shadow: inset 0 0 0 1px #f6f6f6; border-right: 2px solid #22a022; }
.title .c0, .title .c1, .title .c2 { background: #00b050; box-shadow: none; color: #fff; font-weight: 700; }
.end .c2 { border-bottom: 2px solid #22a022; }
td.c3 { position: relative; }
.fillopt { position: absolute; left: 2px; top: 1px; width: 23px; height: 16px; gap: 2px; background: #e6e6e6; }
.watermark { position: absolute; left: 243px; top: 105px; width: 220px; transform: rotate(-45deg); color: rgba(90, 90, 90, .13); font-weight: 700; pointer-events: none; }
.wcn { display: flex; justify-content: space-between; font-size: 37px; line-height: 30px; }
.wen { font: 700 23px/24px "Liberation Sans", sans-serif; text-align: center; white-space: nowrap; }
.vscroll { display: flex; flex-direction: column; align-items: center; flex: none; width: 12px; box-sizing: border-box; padding: 2px 0 5px; background: #dedede; }
.vscroll b { width: 7px; height: 3px; margin-bottom: 9px; background: #c8c8c8; }
.vscroll i { width: 9px; height: 126px; margin: 5px 0 auto; border: 1px solid #bcbcbc; border-radius: 5px; background: #f8f8f8; box-sizing: border-box; }

.sheetbar { display: flex; align-items: center; flex: none; height: 15px; padding-right: 6px; background: #e6e6e6; border-top: 1px solid #d0d0d0; }
.sheetnav { display: flex; justify-content: space-between; width: 61px; margin: 0 12px 0 11px; }
.sheettab { width: 49px; align-self: stretch; padding-left: 4px; background: #fff; color: #22a022; font-weight: 700; font-size: 8px; }
.addsheet { margin: 0 auto 0 5px; }
.grip { width: 3px; height: 7px; background: #c8c8c8; }
.hscroll { display: flex; align-items: center; width: 40%; max-width: 283px; box-sizing: border-box; padding: 0 6px 0 5px; margin: 0 3px 0 5px; height: 15px; background: #dedede; }
.hscroll i { width: 142px; height: 10px; box-sizing: border-box; margin: 0 auto 0 5px; border: 1px solid #b5b5b5; border-radius: 5px; background: #fafafa; }

.status { display: flex; align-items: center; flex: none; height: 19px; padding: 0 2px 0 10px; background: #f3f3f3; }
.macro { height: 16px; padding-right: 10px; border-right: 1px solid #ddd; }
.protect { height: 16px; gap: 3px; padding: 0 9px 0 8px; border-right: 1px solid #ddd; }
.stats { margin-left: auto; font-family: "Noto Sans CJK SC", sans-serif; font-size: 9px; white-space: nowrap; color: #555; }
.views { display: flex; align-items: center; gap: 3px; margin: 0 16px 0 8px; }
.views button { width: 16px; height: 16px; border-radius: 2px; }
.views .on { background: #c8c8c8; }
.views .withcaret { width: 19px; gap: 3px; }
.zoomer { display: flex; align-items: center; padding-left: 7px; border-left: 1px solid #ddd; }
.zoomer .percent { gap: 4px; margin-right: 8px; font-size: 9px; }
.zoomer input { width: 97px; height: 12px; margin: 0 7px; appearance: none; background: linear-gradient(#aaa, #aaa) center / 100% 1px no-repeat; }
.zoomer input::-webkit-slider-thumb { appearance: none; width: 9px; height: 9px; box-sizing: border-box; border: 1px solid #555; border-radius: 50%; background: #fff; }
</style>
